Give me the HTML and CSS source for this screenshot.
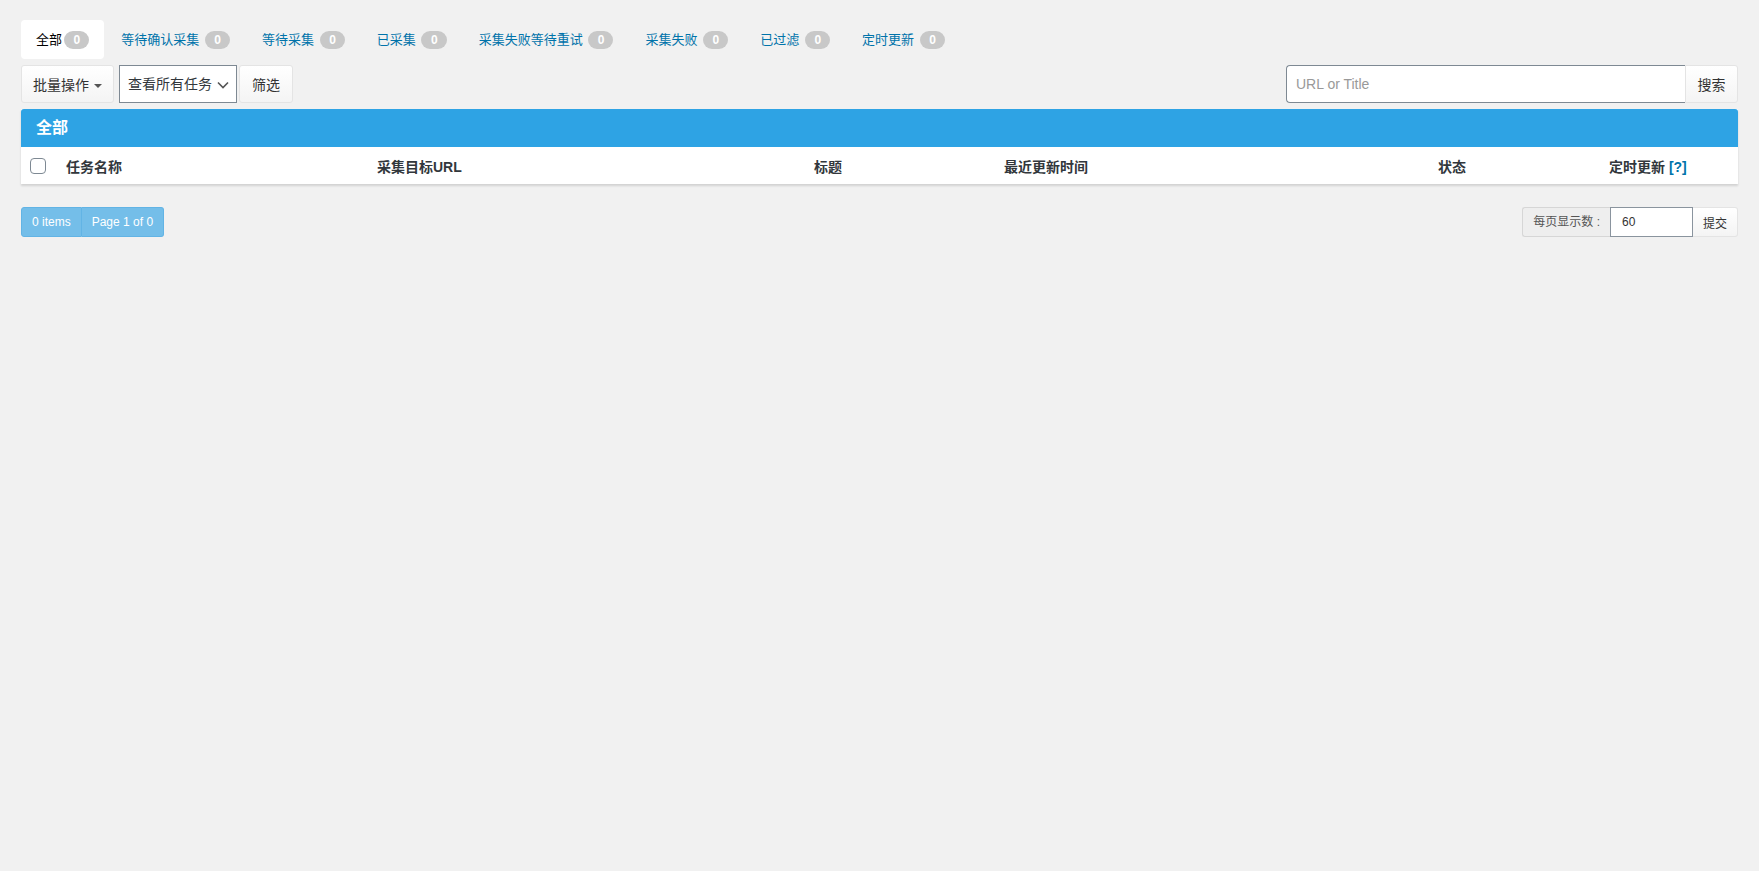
FILE: index.html
```html
<!DOCTYPE html>
<html lang="zh-CN">
<head>
    <meta charset="UTF-8">
    <title>采集任务</title>
    <link rel="stylesheet" href="styles.css">
</head>
<body>
    <div class="wrap">
        <ul class="status-tabs">
            <li class="active"><a href="#">全部<span class="badge">0</span></a></li>
            <li><a href="#">等待确认采集 <span class="badge">0</span></a></li>
            <li><a href="#">等待采集 <span class="badge">0</span></a></li>
            <li><a href="#">已采集 <span class="badge">0</span></a></li>
            <li><a href="#">采集失败等待重试 <span class="badge">0</span></a></li>
            <li><a href="#">采集失败 <span class="badge">0</span></a></li>
            <li><a href="#">已过滤 <span class="badge">0</span></a></li>
            <li><a href="#">定时更新 <span class="badge">0</span></a></li>
        </ul>

        <div class="toolbar">
            <div class="actions">
                <button type="button" class="btn btn-bulk">批量操作 <span class="caret"></span></button>
                <span class="select-wrap">
                    <select class="task-select">
                        <option>查看所有任务</option>
                    </select>
                    <svg class="chevron" width="12" height="8" viewBox="0 0 12 8"><path d="M1 1.5 6 6.5 11 1.5" fill="none" stroke="#555" stroke-width="1.6"/></svg>
                </span>
                <button type="button" class="btn btn-filter">筛选</button>
            </div>
            <form class="search">
                <input type="text" class="search-input" placeholder="URL or Title">
                <button type="button" class="btn btn-search">搜索</button>
            </form>
        </div>

        <div class="panel">
            <div class="panel-heading">全部</div>
            <table class="task-table">
                <colgroup>
                    <col style="width:37px">
                    <col style="width:311px">
                    <col style="width:437px">
                    <col style="width:190px">
                    <col style="width:434px">
                    <col style="width:171px">
                    <col>
                </colgroup>
                <thead>
                    <tr>
                        <th class="check"><input type="checkbox"></th>
                        <th>任务名称</th>
                        <th>采集目标URL</th>
                        <th>标题</th>
                        <th>最近更新时间</th>
                        <th>状态</th>
                        <th>定时更新 <a href="#" class="help">[?]</a></th>
                    </tr>
                </thead>
            </table>
        </div>

        <div class="footer-bar">
            <div class="pager">
                <span class="pager-item">0 items</span><span class="pager-item">Page 1 of 0</span>
            </div>
            <form class="per-page">
                <span class="addon">每页显示数 :</span><input type="text" class="per-input" value="60"><button type="button" class="btn btn-sm">提交</button>
            </form>
        </div>
    </div>
</body>
</html>
```

FILE: styles.css
```css
html,body{
    margin: 0;
    padding: 0;
    background: #f1f1f1;
}
body{
    font-family: "Liberation Sans", "Noto Sans CJK SC", sans-serif;
    font-size: 13px;
    color: #333;
}
.wrap{
    padding: 20px 21px;
}
/* 状态标签 */
.status-tabs{
    display: flex;
    margin: 0;
    padding: 0;
    list-style: none;
}
.status-tabs li{
    margin-right: 2px;
}
.status-tabs a{
    display: block;
    padding: 10px 15px;
    line-height: 19px;
    font-size: 13px;
    color: #0073aa;
    text-decoration: none;
    border-radius: 4px;
}
.status-tabs li.active a{
    background: #fff;
    color: #000;
}
.badge{
    display: inline-block;
    margin-left: 2px;
    padding: 3px 9px 3px 9.5px;
    font-size: 12px;
    font-weight: bold;
    line-height: 1;
    color: #fff;
    background: #c8c8c8;
    border-radius: 10px;
    vertical-align: 0;
}
/* 工具栏 */
.toolbar{
    display: flex;
    justify-content: space-between;
    margin-top: 6px;
}
.actions{
    display: flex;
}
.btn{
    box-sizing: border-box;
    height: 38px;
    padding: 0 12px;
    font-family: inherit;
    font-size: 14px;
    color: #333;
    white-space: nowrap;
    background: linear-gradient(#fff, #f4f4f4);
    border: 1px solid #e4e4e4;
    border-radius: 3px;
    cursor: pointer;
}
.btn-bulk{
    width: 93px;
    padding: 0;
}
.caret{
    display: inline-block;
    width: 0;
    height: 0;
    margin-left: 1px;
    border-top: 4px solid #555;
    border-left: 4px solid transparent;
    border-right: 4px solid transparent;
    vertical-align: middle;
}
.select-wrap{
    position: relative;
    display: inline-block;
    margin-left: 5px;
}
.task-select{
    box-sizing: border-box;
    width: 118px;
    height: 38px;
    padding: 0 24px 0 8px;
    font-family: inherit;
    font-size: 14px;
    color: #32373c;
    background: #fff;
    border: 1px solid #7e8993;
    border-radius: 0;
    appearance: none;
    -webkit-appearance: none;
}
.chevron{
    position: absolute;
    top: 16px;
    right: 8px;
    pointer-events: none;
}
.btn-filter{
    width: 54px;
    margin-left: 2px;
    padding: 0;
}
.search{
    display: flex;
    margin: 0;
}
.search-input{
    box-sizing: border-box;
    width: 399px;
    height: 38px;
    padding: 0 9px;
    font-family: inherit;
    font-size: 14px;
    background: #fff;
    border: 1px solid #7e8993;
    border-right: 0;
    border-radius: 4px 0 0 4px;
    outline: none;
}
.search-input::placeholder{
    color: #999;
}
.btn-search{
    width: 53px;
    padding: 0;
    border-radius: 0 3px 3px 0;
}
/* 列表面板 */
.panel{
    margin-top: 6px;
    background: #fff;
    box-shadow: 0 2px 2px rgba(0,0,0,.13);
}
.panel-heading{
    height: 38px;
    line-height: 38px;
    padding: 0 15px;
    font-size: 16px;
    font-weight: bold;
    color: #fff;
    background: #2ea3e4;
    border-radius: 3px 3px 0 0;
}
.task-table{
    width: 100%;
    border-collapse: collapse;
    table-layout: fixed;
}
.task-table th{
    height: 37px;
    padding: 0 8px;
    font-size: 14px;
    font-weight: bold;
    text-align: left;
    color: #32373c;
}
.task-table th.check{
    padding: 0 0 0 9px;
}
.task-table input[type=checkbox]{
    display: block;
    width: 16px;
    height: 16px;
    margin: 0;
    background: #fff;
    border: 1px solid #7e8993;
    border-radius: 4px;
    appearance: none;
    -webkit-appearance: none;
}
.help{
    color: #0073aa;
    text-decoration: none;
}
/* 底部分页 */
.footer-bar{
    display: flex;
    justify-content: space-between;
    margin-top: 23px;
}
.pager{
    display: flex;
}
.pager-item{
    padding: 5px 10px;
    line-height: 18px;
    font-size: 12px;
    color: #fff;
    background: #74bee9;
    border: 1px solid #62b4e5;
}
.pager-item:first-child{
    border-radius: 3px 0 0 3px;
}
.pager-item:last-child{
    border-left: 0;
    border-radius: 0 3px 3px 0;
}
.per-page{
    display: flex;
    margin: 0;
}
.addon{
    padding: 5px 10px;
    line-height: 18px;
    font-size: 12px;
    color: #555;
    background: #eee;
    border: 1px solid #d6d6d6;
    border-right: 0;
    border-radius: 3px 0 0 3px;
}
.per-input{
    box-sizing: border-box;
    width: 83px;
    height: 30px;
    padding: 0 11px;
    font-family: inherit;
    font-size: 12px;
    color: #333;
    border: 1px solid #8a949e;
    border-radius: 0;
    outline: none;
}
.btn-sm{
    height: 30px;
    padding: 0 10px;
    font-size: 12px;
    border-left: 0;
    border-radius: 0 3px 3px 0;
}
```
